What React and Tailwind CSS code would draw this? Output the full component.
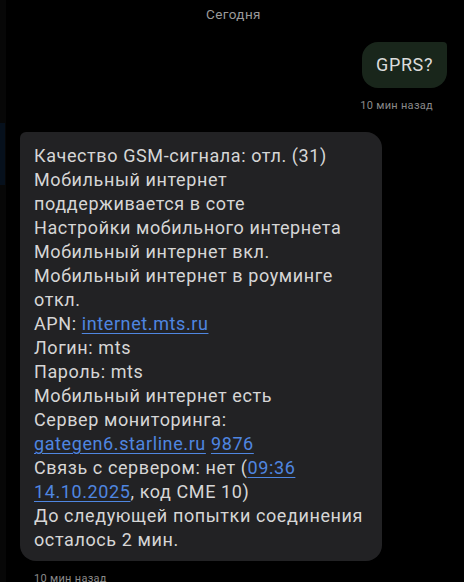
export default function App() {
  const link = 'text-[#4f86e0] underline decoration-[#4f86e0] underline-offset-[3px]';
  return (
    <div className="relative w-[464px] h-[582px] overflow-hidden bg-black font-['Roboto',sans-serif]">
      {/* left edge of neighbouring panel */}
      <div className="absolute left-0 top-0 w-[6px] h-full bg-[#070707]">
        <div className="mt-[123px] h-[62px] w-[5px] bg-[#06101c]" />
      </div>

      <div className="pl-[20px] pr-[17px]">
        <div className="pt-[5px] text-center text-[13.5px] leading-[18px] tracking-[0.4px] text-[#9a9a9a]">Сегодня</div>

        <div className="mt-[19px] flex flex-col items-end">
          <div className="rounded-[16px] rounded-tr-[4px] bg-[#19261b] px-[14px] py-[11px] text-[18px] leading-[24px] tracking-[0.6px] text-[#dcdcdc]">
            GPRS?
          </div>
          <div className="mt-[11px] mr-[14px] text-[11px] leading-[14px] tracking-[0.3px] text-[#8a8a8a]">10 мин назад</div>
        </div>

        <div className="mt-[19px] w-[362px] rounded-[16px] rounded-tl-[6px] bg-[#222224] pl-[14px] pr-[8px] pt-[12px] pb-[9px] text-[18px] leading-[24px] tracking-[0.6px] text-[#d6d6d6]">
          <div>Качество GSM-сигнала: отл. (31)</div>
          <div>Мобильный интернет</div>
          <div>поддерживается в соте</div>
          <div>Настройки мобильного интернета</div>
          <div>Мобильный интернет вкл.</div>
          <div>Мобильный интернет в роуминге</div>
          <div>откл.</div>
          <div>APN: <span className={link}>internet.mts.ru</span></div>
          <div>Логин: mts</div>
          <div>Пароль: mts</div>
          <div>Мобильный интернет есть</div>
          <div>Сервер мониторинга:</div>
          <div><span className={link}>gategen6.starline.ru</span> <span className={link}>9876</span></div>
          <div>Связь с сервером: нет (<span className={link}>09:36</span></div>
          <div><span className={link}>14.10.2025</span>, код CME 10)</div>
          <div className="whitespace-nowrap">До следующей попытки соединения</div>
          <div>осталось 2 мин.</div>
        </div>

        <div className="mt-[11px] pl-[14px] text-[11px] leading-[14px] tracking-[0.3px] text-[#8a8a8a]">10 мин назад</div>
      </div>
    </div>
  );
}
